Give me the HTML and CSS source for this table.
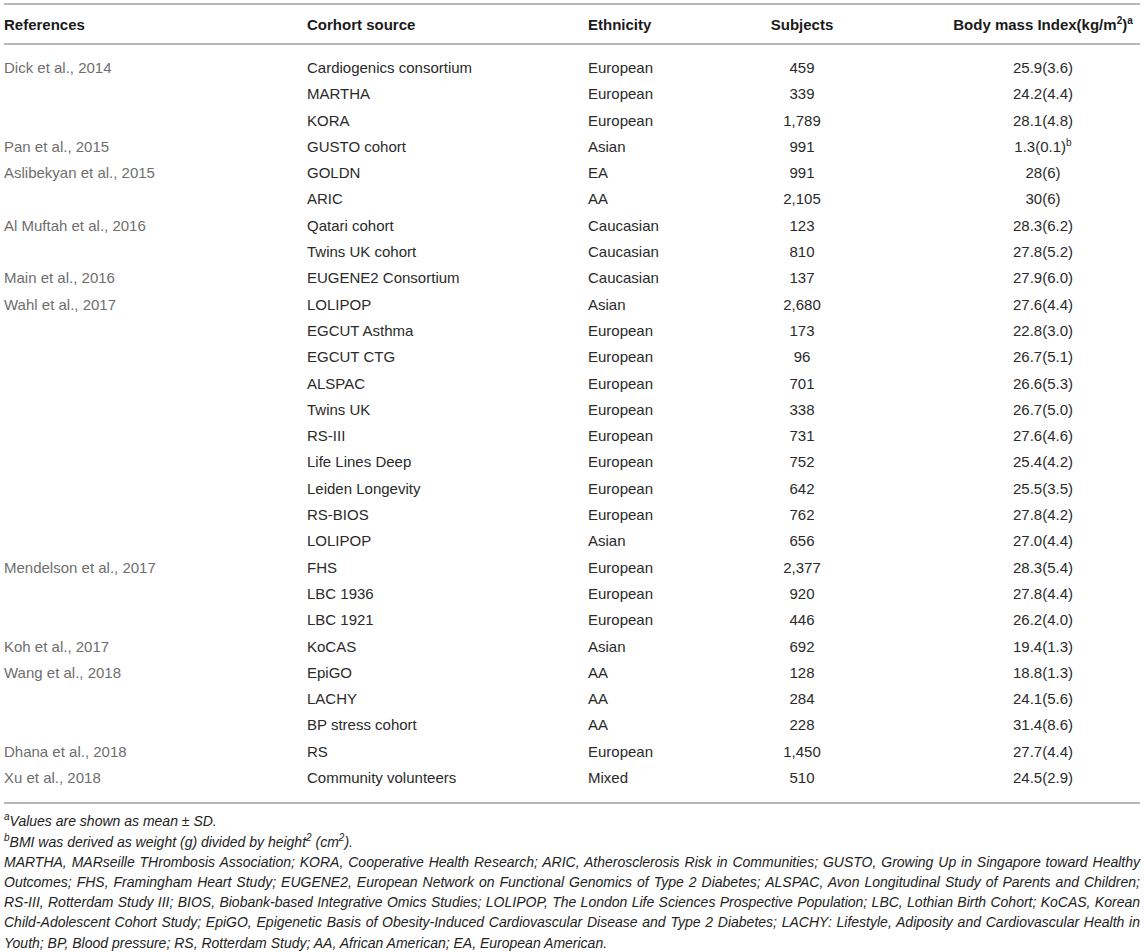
FILE: index.html
```html
<!DOCTYPE html>
<html lang="en">
<head>
    <meta charset="UTF-8">
    <meta name="viewport" content="width=device-width, initial-scale=1.0">
    <title>BMI cohorts</title>
    <link rel="stylesheet" href="styles.css">
</head>
<body>
    <div class="wrap">
        <table class="cohorts">
            <colgroup>
                <col class="c-ref">
                <col class="c-src">
                <col class="c-eth">
                <col class="c-sub">
                <col class="c-bmi">
            </colgroup>
            <thead>
                <tr>
                    <th>References</th>
                    <th>Corhort source</th>
                    <th>Ethnicity</th>
                    <th class="mid">Subjects</th>
                    <th class="mid">Body mass Index(kg/m<sup>2</sup>)<sup>a</sup></th>
                </tr>
            </thead>
            <tbody>
                <tr><td class="ref">Dick et al., 2014</td><td>Cardiogenics consortium</td><td>European</td><td class="mid">459</td><td class="mid">25.9(3.6)</td></tr>
                <tr><td class="ref"></td><td>MARTHA</td><td>European</td><td class="mid">339</td><td class="mid">24.2(4.4)</td></tr>
                <tr><td class="ref"></td><td>KORA</td><td>European</td><td class="mid">1,789</td><td class="mid">28.1(4.8)</td></tr>
                <tr><td class="ref">Pan et al., 2015</td><td>GUSTO cohort</td><td>Asian</td><td class="mid">991</td><td class="mid">1.3(0.1)<sup>b</sup></td></tr>
                <tr><td class="ref">Aslibekyan et al., 2015</td><td>GOLDN</td><td>EA</td><td class="mid">991</td><td class="mid">28(6)</td></tr>
                <tr><td class="ref"></td><td>ARIC</td><td>AA</td><td class="mid">2,105</td><td class="mid">30(6)</td></tr>
                <tr><td class="ref">Al Muftah et al., 2016</td><td>Qatari cohort</td><td>Caucasian</td><td class="mid">123</td><td class="mid">28.3(6.2)</td></tr>
                <tr><td class="ref"></td><td>Twins UK cohort</td><td>Caucasian</td><td class="mid">810</td><td class="mid">27.8(5.2)</td></tr>
                <tr><td class="ref">Main et al., 2016</td><td>EUGENE2 Consortium</td><td>Caucasian</td><td class="mid">137</td><td class="mid">27.9(6.0)</td></tr>
                <tr><td class="ref">Wahl et al., 2017</td><td>LOLIPOP</td><td>Asian</td><td class="mid">2,680</td><td class="mid">27.6(4.4)</td></tr>
                <tr><td class="ref"></td><td>EGCUT Asthma</td><td>European</td><td class="mid">173</td><td class="mid">22.8(3.0)</td></tr>
                <tr><td class="ref"></td><td>EGCUT CTG</td><td>European</td><td class="mid">96</td><td class="mid">26.7(5.1)</td></tr>
                <tr><td class="ref"></td><td>ALSPAC</td><td>European</td><td class="mid">701</td><td class="mid">26.6(5.3)</td></tr>
                <tr><td class="ref"></td><td>Twins UK</td><td>European</td><td class="mid">338</td><td class="mid">26.7(5.0)</td></tr>
                <tr><td class="ref"></td><td>RS-III</td><td>European</td><td class="mid">731</td><td class="mid">27.6(4.6)</td></tr>
                <tr><td class="ref"></td><td>Life Lines Deep</td><td>European</td><td class="mid">752</td><td class="mid">25.4(4.2)</td></tr>
                <tr><td class="ref"></td><td>Leiden Longevity</td><td>European</td><td class="mid">642</td><td class="mid">25.5(3.5)</td></tr>
                <tr><td class="ref"></td><td>RS-BIOS</td><td>European</td><td class="mid">762</td><td class="mid">27.8(4.2)</td></tr>
                <tr><td class="ref"></td><td>LOLIPOP</td><td>Asian</td><td class="mid">656</td><td class="mid">27.0(4.4)</td></tr>
                <tr><td class="ref">Mendelson et al., 2017</td><td>FHS</td><td>European</td><td class="mid">2,377</td><td class="mid">28.3(5.4)</td></tr>
                <tr><td class="ref"></td><td>LBC 1936</td><td>European</td><td class="mid">920</td><td class="mid">27.8(4.4)</td></tr>
                <tr><td class="ref"></td><td>LBC 1921</td><td>European</td><td class="mid">446</td><td class="mid">26.2(4.0)</td></tr>
                <tr><td class="ref">Koh et al., 2017</td><td>KoCAS</td><td>Asian</td><td class="mid">692</td><td class="mid">19.4(1.3)</td></tr>
                <tr><td class="ref">Wang et al., 2018</td><td>EpiGO</td><td>AA</td><td class="mid">128</td><td class="mid">18.8(1.3)</td></tr>
                <tr><td class="ref"></td><td>LACHY</td><td>AA</td><td class="mid">284</td><td class="mid">24.1(5.6)</td></tr>
                <tr><td class="ref"></td><td>BP stress cohort</td><td>AA</td><td class="mid">228</td><td class="mid">31.4(8.6)</td></tr>
                <tr><td class="ref">Dhana et al., 2018</td><td>RS</td><td>European</td><td class="mid">1,450</td><td class="mid">27.7(4.4)</td></tr>
                <tr><td class="ref">Xu et al., 2018</td><td>Community volunteers</td><td>Mixed</td><td class="mid">510</td><td class="mid">24.5(2.9)</td></tr>
            </tbody>
        </table>

        <div class="notes">
            <p><sup>a</sup>Values are shown as mean ± SD.</p>
            <p><sup>b</sup>BMI was derived as weight (g) divided by height<sup>2</sup> (cm<sup>2</sup>).</p>
            <p class="abbr">MARTHA, MARseille THrombosis Association; KORA, Cooperative Health Research; ARIC, Atherosclerosis Risk in Communities; GUSTO, Growing Up in Singapore toward Healthy Outcomes; FHS, Framingham Heart Study; EUGENE2, European Network on Functional Genomics of Type 2 Diabetes; ALSPAC, Avon Longitudinal Study of Parents and Children; RS-III, Rotterdam Study III; BIOS, Biobank-based Integrative Omics Studies; LOLIPOP, The London Life Sciences Prospective Population; LBC, Lothian Birth Cohort; KoCAS, Korean Child-Adolescent Cohort Study; EpiGO, Epigenetic Basis of Obesity-Induced Cardiovascular Disease and Type 2 Diabetes; LACHY: Lifestyle, Adiposity and Cardiovascular Health in Youth; BP, Blood pressure; RS, Rotterdam Study; AA, African American; EA, European American.</p>
        </div>
    </div>
</body>
</html>
```

FILE: styles.css
```css
body {
    margin: 0;
    background: #fff;
    font-family: "Liberation Sans", Arial, sans-serif;
    color: #2a2a2a;
}
.wrap {
    padding: 3px 4px 0 4px;
    width: 1136px;
}
.cohorts {
    width: 1136px;
    table-layout: fixed;
    border-collapse: collapse;
    border-top: 2px solid #b6b6b6;
    border-bottom: 2px solid #b6b6b6;
    font-size: 15px;
}
.c-ref { width: 303px; }
.c-src { width: 281px; }
.c-eth { width: 70px; }
.c-sub { width: 288px; }
.c-bmi { width: 194px; }

.cohorts th {
    height: 38px;
    padding: 0;
    text-align: left;
    font-weight: bold;
    color: #1a1a1a;
    white-space: nowrap;
    border-bottom: 2px solid #b6b6b6;
    vertical-align: middle;
}
.cohorts td {
    padding: 0;
    height: 26.3px;
    line-height: 26.3px;
    white-space: nowrap;
    overflow: visible;
    color: #2a2a2a;
}
.cohorts tbody tr:first-child td {
    padding-top: 10px;
}
.cohorts tbody tr:last-child td {
    padding-bottom: 11px;
}
.cohorts td.ref {
    color: #6e6e6e;
}
.cohorts .mid {
    text-align: center;
}
sup {
    font-size: 10px;
    line-height: 0;
    vertical-align: baseline;
    position: relative;
    top: -0.6em;
}
.notes {
    margin-top: 7px;
    font-size: 14px;
    font-style: italic;
    line-height: 20.2px;
    color: #222;
}
.notes p {
    margin: 0;
}
.notes .abbr {
    text-align: justify;
}
.notes sup {
    font-size: 10px;
}
```
